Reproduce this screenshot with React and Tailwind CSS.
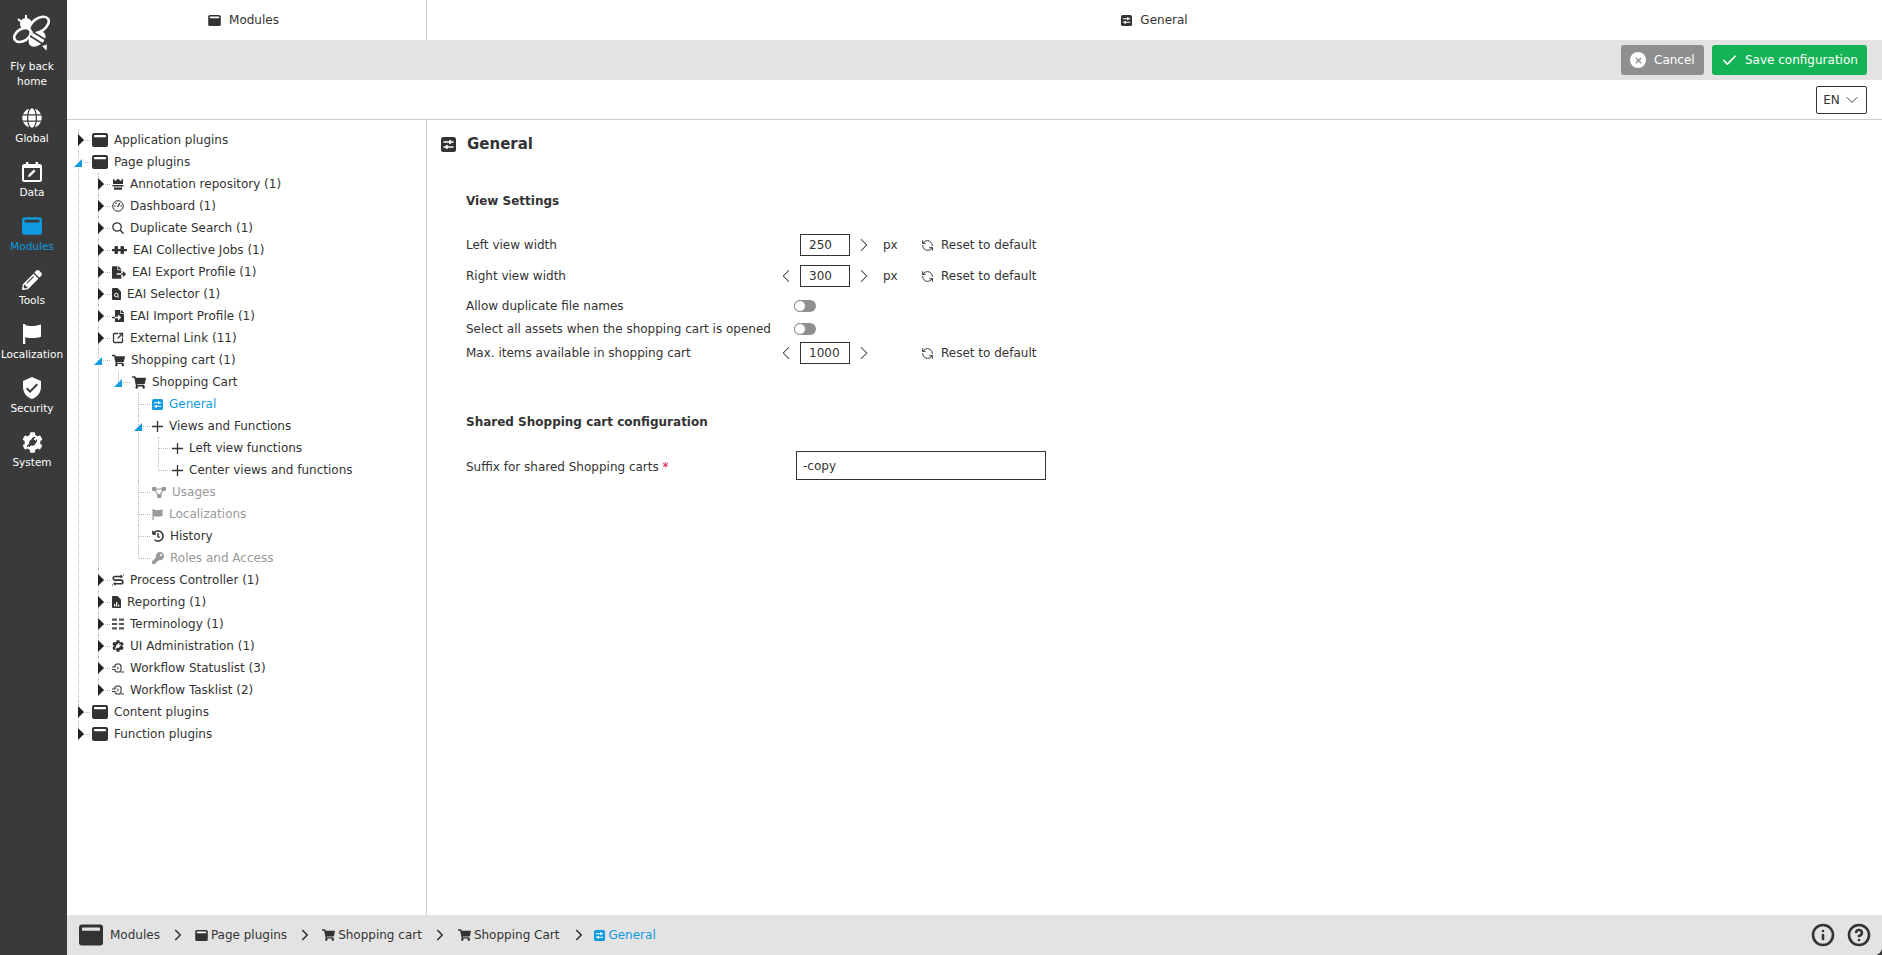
import React from "react";
import { ChevronDown, ChevronLeft, ChevronRight, Check, X, Info, CircleHelp, SquareArrowOutUpRight, RefreshCcw } from "lucide-react";
import { FaGlobe, FaPencilAlt, FaCog, FaWrench, FaShoppingCart, FaHistory, FaKey, FaFileExport, FaFileImport } from "react-icons/fa";
import { MdVerifiedUser } from "react-icons/md";

const WindowIcon = ({ className, bar = "#fff" }) => (
  <svg viewBox="0 0 16 14" className={className}>
    <rect width="16" height="14" rx="2" fill="currentColor" />
    <rect x="2" y="2" width="12" height="2.2" rx="0.6" fill={bar} />
  </svg>
);

const SlidersIcon = ({ className }) => (
  <svg viewBox="0 0 12 12" className={className}>
    <rect width="12" height="12" rx="2" fill="currentColor" />
    <path d="M2 4h8M2 8h8" stroke="#fff" strokeWidth="1.1" fill="none" />
    <rect x="6.500" y="2.500" width="1.600" height="3" fill="#fff" />
    <rect x="3.800" y="6.500" width="1.600" height="3" fill="#fff" />
  </svg>
);

const FlagIcon = ({ className }) => (
  <svg viewBox="0 0 20 22" className={className}>
    <path d="M0 0h2.500v1C7 2.500 11 3 20 .5V14c-8 2.500-13 1.500-17.500.5V22H0z" fill="currentColor" />
  </svg>
);

const PlusIcon = () => (
  <svg viewBox="0 0 11 11" className="h-[11px] w-[11px]">
    <path d="M5.500 0v11M0 5.500h11" stroke="#333" strokeWidth="1.300" />
  </svg>
);

const SearchIcon = () => (
  <svg viewBox="0 0 12 12" className="h-[12px] w-[12px]">
    <circle cx="5" cy="5" r="4.200" fill="none" stroke="#333" strokeWidth="1.300" />
    <path d="M8 8l3.500 3.500" stroke="#333" strokeWidth="1.500" />
  </svg>
);

const Crown = () => (
  <svg viewBox="0 0 12 12" className="h-[12px] w-[12px]">
    <path d="M1 .5 3.500 3 6 .5 8.500 3 11 .5V6H1zM.5 7h11v1.400H.5zM2 9.400h8V11.800H2z" fill="#333" />
  </svg>
);

const Gauge = () => (
  <svg viewBox="0 0 12 12" className="h-[12px] w-[12px]">
    <circle cx="6" cy="6" r="5.300" fill="none" stroke="#333" strokeWidth="1" />
    <path d="M5.500 7 8 3" stroke="#333" strokeWidth="1.400" />
    <circle cx="2.800" cy="6" r=".8" fill="#333" /><circle cx="4" cy="3.300" r=".8" fill="#333" /><circle cx="9.200" cy="6" r=".8" fill="#333" />
  </svg>
);

const Jobs = () => (
  <svg viewBox="0 0 15 10" className="h-[10px] w-[15px]">
    <path d="M0 4h15v2.200H0z" fill="#333" />
    <rect x="2.500" y="1" width="3.500" height="8" rx="1" fill="#333" />
    <rect x="8.500" y="1" width="3.500" height="8" rx="1" fill="#333" />
  </svg>
);

const FileSearch = () => (
  <svg viewBox="0 0 9 12" className="h-[12px] w-[9px]">
    <path d="M1 0h4.500L9 3.500V11a1 1 0 0 1-1 1H1a1 1 0 0 1-1-1V1a1 1 0 0 1 1-1z" fill="#333" />
    <circle cx="4.300" cy="7" r="1.800" fill="none" stroke="#fff" strokeWidth="1" />
    <path d="M5.600 8.300 7 9.700" stroke="#fff" strokeWidth="1" />
  </svg>
);

const Usages = () => (
  <svg viewBox="0 0 14 11" className="h-[11px] w-[14px]">
    <path d="M2 2h10M2 2l5 7M12 2 7 9" stroke="#999" strokeWidth="1.200" />
    <rect x="0" y="0" width="4.500" height="4" rx="1" fill="#999" />
    <rect x="9.500" y="0" width="4.500" height="4" rx="1" fill="#999" />
    <rect x="5" y="7" width="4.500" height="4" rx="1" fill="#999" />
  </svg>
);

const ProcessIcon = () => (
  <svg viewBox="0 0 12 12" className="h-[12px] w-[12px]">
    <path d="M10 2.500H3a1.800 1.800 0 0 0 0 3.600h6a1.800 1.800 0 0 1 0 3.600H2" fill="none" stroke="#333" strokeWidth="1.600" />
    <path d="M8.500.5 11 2.500 8.500 4.500zM3.500 7.700 1 9.700l2.500 2z" fill="#333" />
    <path d="M11 .5h1V1.500h-1zM0 10.500h1v1H0z" fill="#333" />
  </svg>
);

const ReportIcon = () => (
  <svg viewBox="0 0 9 12" className="h-[12px] w-[9px]">
    <path d="M1 0h4.500L9 3.500V11a1 1 0 0 1-1 1H1a1 1 0 0 1-1-1V1a1 1 0 0 1 1-1z" fill="#333" />
    <path d="M2 8h1.200v2.500H2zM4 6h1.200v4.500H4zM6 8.500h1.200v2H6z" fill="#fff" />
  </svg>
);

const TermIcon = () => (
  <svg viewBox="0 0 12 12" className="h-[12px] w-[12px]">
    <path d="M0 .5h5v2.200H0zM0 4.900h5v2.200H0zM0 9.300h5v2.200H0zM7 .5h5v2.200H7zM7 4.900h5v2.200H7zM7 9.300h5v2.200H7z" fill="#555" />
  </svg>
);

const FlowIcon = () => (
  <svg viewBox="0 0 12 12" className="h-[12px] w-[12px]">
    <path d="M2.800 5V3.500L4.500 2h3l1.500 1.500V8l-1.500 2h-3L2.800 8.500" fill="none" stroke="#333" strokeWidth="1.100" />
    <path d="M0 5h3.500M0 7.500h3.500M5 4.500l1.500 1.500L5 7.500M8.500 10H12" stroke="#333" strokeWidth="1" fill="none" />
  </svg>
);

const DataIcon = () => (
  <svg viewBox="0 0 20 20" className="h-[20px] w-[20px]">
    <path d="M4 0h2.400v2h7.200V0H16v2h1.500A2.500 2.500 0 0 1 20 4.500v13a2.500 2.500 0 0 1-2.500 2.500h-15A2.500 2.500 0 0 1 0 17.500v-13A2.500 2.500 0 0 1 2.500 2H4zM2 6v11.500a.5.5 0 0 0 .5.5h15a.5.5 0 0 0 .5-.5V6z" fill="#fff" />
    <path d="M11.800 7.500l1.700 1.700-5.300 5.300-2.200.5.500-2.200z" fill="#fff" />
  </svg>
);

const Bee = () => (
  <svg viewBox="0 0 38 38" className="h-[38px] w-[38px]">
    <path d="M13 1v4M5 5l3 2.500" stroke="#fff" strokeWidth="2" />
    <circle cx="13" cy="10" r="6" fill="#fff" />
    <ellipse cx="26" cy="11" rx="11" ry="6.500" transform="rotate(-35 26 11)" fill="#3a3a3a" stroke="#fff" strokeWidth="2.600" />
    <ellipse cx="9.500" cy="21" rx="9" ry="6" transform="rotate(-32 9.500 21)" fill="#3a3a3a" stroke="#fff" strokeWidth="2.600" />
    <ellipse cx="24" cy="25" rx="9.500" ry="6.500" transform="rotate(-38 24 25)" fill="#fff" />
    <path d="M17 22l13 8M20 18l13 8" stroke="#3a3a3a" strokeWidth="1.600" />
    <path d="M29 32l4.500 4.500.5-6z" fill="#fff" />
  </svg>
);

const GearWrench = ({ size, gear, wrench }) => (
  <span className={`relative flex items-center justify-center ${size}`}>
    <FaCog className={`h-full w-full ${gear}`} />
    <FaWrench className={`absolute h-1/2 w-1/2 ${wrench}`} />
  </span>
);

const SideItem = ({ icon, label, active }) => (
  <div className={`flex h-[54px] flex-col items-center ${active ? "text-[#0e9be0]" : "text-white"}`}>
    <div className="flex h-[24px] items-center justify-center">{icon}</div>
    <span className="mt-[1px] whitespace-nowrap text-[10.5px] leading-[14px]">{label}</span>
  </div>
);

const Triangle = ({ open }) =>
  open ? (
    <svg viewBox="0 0 8 8" className="absolute left-[-4px] top-[8px] h-[8px] w-[8px]">
      <path d="M8 0v8H0z" fill="#0e9be0" />
    </svg>
  ) : (
    <svg viewBox="0 0 6 12" className="absolute left-0 top-[5px] h-[12px] w-[6px]">
      <path d="M0 0l6 6-6 6z" fill="#222" />
    </svg>
  );

const win = <WindowIcon className="h-[14px] w-[16px] text-[#333]" />;
const cart = <FaShoppingCart className="h-[13px] w-[14px] text-[#333]" />;
const cartSmall = <FaShoppingCart className="h-[13px] w-[13px] text-[#333]" />;
const plus = <PlusIcon />;
const flow = <FlowIcon />;

const tree = [
  { label: "Application plugins", icon: win, closed: true },
  {
    label: "Page plugins",
    icon: win,
    children: [
      { label: "Annotation repository (1)", icon: <Crown />, closed: true },
      { label: "Dashboard (1)", icon: <Gauge />, closed: true },
      { label: "Duplicate Search (1)", icon: <SearchIcon />, closed: true },
      { label: "EAI Collective Jobs (1)", icon: <Jobs />, closed: true },
      { label: "EAI Export Profile (1)", icon: <FaFileExport className="h-[13px] w-[14px] text-[#333]" />, closed: true },
      { label: "EAI Selector (1)", icon: <FileSearch />, closed: true },
      { label: "EAI Import Profile (1)", icon: <FaFileImport className="h-[12px] w-[12px] text-[#333]" />, closed: true },
      { label: "External Link (11)", icon: <SquareArrowOutUpRight className="h-[12px] w-[12px] text-[#333]" strokeWidth={2.6} />, closed: true },
      {
        label: "Shopping cart (1)",
        icon: cartSmall,
        children: [
          {
            label: "Shopping Cart",
            icon: cart,
            children: [
              { label: "General", icon: <SlidersIcon className="h-[11px] w-[11px] text-[#0e9be0]" />, active: true },
              {
                label: "Views and Functions",
                icon: plus,
                children: [
                  { label: "Left view functions", icon: plus },
                  { label: "Center views and functions", icon: plus },
                ],
              },
              { label: "Usages", icon: <Usages />, muted: true },
              { label: "Localizations", icon: <FlagIcon className="h-[11px] w-[11px] text-[#999]" />, muted: true },
              { label: "History", icon: <FaHistory className="h-[12px] w-[12px] text-[#333]" /> },
              { label: "Roles and Access", icon: <FaKey className="h-[12px] w-[12px] text-[#999]" />, muted: true },
            ],
          },
        ],
      },
      { label: "Process Controller (1)", icon: <ProcessIcon />, closed: true },
      { label: "Reporting (1)", icon: <ReportIcon />, closed: true },
      { label: "Terminology (1)", icon: <TermIcon />, closed: true },
      { label: "UI Administration (1)", icon: <GearWrench size="h-[12px] w-[12px]" gear="text-[#333]" wrench="text-white" />, closed: true },
      { label: "Workflow Statuslist (3)", icon: flow, closed: true },
      { label: "Workflow Tasklist (2)", icon: flow, closed: true },
    ],
  },
  { label: "Content plugins", icon: win, closed: true },
  { label: "Function plugins", icon: win, closed: true },
];

const TreeNode = ({ node, last }) => (
  <li className="relative">
    <span className={`absolute left-0 top-0 border-l border-dotted border-[#bbb] ${last ? "h-[11px]" : "h-full"}`} />
    <div className="flex h-[22px] items-center">
      <span className="relative flex h-[22px] w-[14px] shrink-0 items-center">
        <span className="ml-[1px] w-[11px] border-t border-dotted border-[#bbb]" />
        {(node.closed || node.children) && <Triangle open={!node.closed} />}
      </span>
      <span className="flex shrink-0 items-center justify-center">{node.icon}</span>
      <span
        className={`ml-[6px] whitespace-nowrap text-[12px] ${
          node.active ? "text-[#0e9be0]" : node.muted ? "text-[#999]" : "text-[#333]"
        }`}
      >
        {node.label}
      </span>
    </div>
    {node.children && (
      <ul className="ml-[20px]">
        {node.children.map((child, i) => (
          <TreeNode key={child.label} node={child} last={i === node.children.length - 1} />
        ))}
      </ul>
    )}
  </li>
);

const Toggle = () => (
  <span className="ml-[14px] flex h-[12px] w-[22px] items-center rounded-full bg-[#8f8f8f]">
    <span className="h-[12px] w-[12px] rounded-full border border-[#8f8f8f] bg-white" />
  </span>
);

const NumberRow = ({ label, value, left, right, unit }) => (
  <div className="flex h-[22px] items-center text-[12px] text-[#333]">
    <span className="w-[306px] shrink-0">{label}</span>
    <span className="flex w-[28px] justify-center">{left && <ChevronLeft className="h-[22px] w-[22px]" strokeWidth={1.1} />}</span>
    <input
      readOnly
      defaultValue={value}
      className="h-[22px] w-[50px] border border-[#333] pl-[8px] text-[12px] outline-none"
    />
    <span className="flex w-[28px] justify-center">{right && <ChevronRight className="h-[22px] w-[22px]" strokeWidth={1.1} />}</span>
    <span className="ml-[5px] w-[38px]">{unit && "px"}</span>
    <RefreshCcw className="h-[13px] w-[13px]" strokeWidth={1.8} />
    <span className="ml-[7px]">Reset to default</span>
  </div>
);

const Crumb = ({ icon, label, active }) => (
  <span className={`flex items-center gap-[3px] text-[12px] ${active ? "text-[#0e9be0]" : "text-[#333]"}`}>
    {icon}
    {label}
  </span>
);

const Sep = () => <ChevronRight className="h-[18px] w-[18px] text-[#333]" strokeWidth={2.2} />;

export default function App() {
  return (
    <div className="flex h-[955px] w-[1882px] overflow-hidden bg-[#3a3a3a] font-['DejaVu_Sans',sans-serif]">
      <aside className="flex w-[67px] shrink-0 flex-col items-center pr-[3px]">
        <div className="mt-[14px] flex h-[38px] justify-center"><Bee /></div>
        <div className="mt-[7px] h-[47px] whitespace-nowrap text-center text-[10.5px] leading-[15px] text-white">
          Fly back
          <br />
          home
        </div>
        <nav className="w-full">
          <SideItem label="Global" icon={<FaGlobe className="h-[20px] w-[20px]" />} />
          <SideItem label="Data" icon={<DataIcon />} />
          <SideItem label="Modules" active icon={<WindowIcon bar="#3a3a3a" className="h-[18px] w-[20px]" />} />
          <SideItem label="Tools" icon={<FaPencilAlt className="h-[20px] w-[20px]" />} />
          <SideItem label="Localization" icon={<FlagIcon className="h-[20px] w-[18px]" />} />
          <SideItem label="Security" icon={<MdVerifiedUser className="h-[24px] w-[24px]" />} />
          <SideItem label="System" icon={<GearWrench size="h-[21px] w-[21px]" gear="text-white" wrench="text-[#3a3a3a]" />} />
        </nav>
      </aside>

      <main className="flex min-w-0 flex-1 flex-col rounded-br-[8px] bg-white">
        <header className="flex h-[40px] shrink-0 text-[12px] text-[#333]">
          <div className="flex w-[360px] items-center justify-center gap-[8px] border-r border-[#ccc] pr-[6px]">
            <WindowIcon className="h-[11px] w-[13px]" />
            Modules
          </div>
          <div className="flex flex-1 items-center justify-center gap-[8px]">
            <SlidersIcon className="h-[11px] w-[11px]" />
            General
          </div>
        </header>

        <div className="flex h-[40px] shrink-0 items-center justify-end gap-[8px] bg-[#e3e3e3] pr-[15px]">
          <button className="flex h-[30px] w-[83px] items-center rounded-[3px] bg-[#8f8f8f] pl-[9px] text-[12px] text-white">
            <span className="flex h-[16px] w-[16px] items-center justify-center rounded-full bg-white">
              <X className="h-[9px] w-[9px] text-[#8f8f8f]" strokeWidth={3.5} />
            </span>
            <span className="ml-[8px]">Cancel</span>
          </button>
          <button className="flex h-[30px] w-[155px] items-center rounded-[3px] bg-[#14b355] pl-[9px] text-[12px] text-white">
            <Check className="h-[17px] w-[17px]" strokeWidth={2.4} />
            <span className="ml-[7px] whitespace-nowrap">Save configuration</span>
          </button>
        </div>

        <div className="flex h-[40px] shrink-0 items-center justify-end border-b border-[#ccc] pr-[15px]">
          <div className="ml-auto flex h-[28px] w-[51px] items-center justify-center gap-[2px] rounded-[2px] border border-[#333] pl-[2px] text-[12px] text-[#333]">
            EN
            <ChevronDown className="h-[20px] w-[20px]" strokeWidth={1.1} />
          </div>
        </div>

        <div className="flex min-h-0 flex-1">
          <div className="w-[360px] shrink-0 border-r border-[#ccc] pl-[11px] pt-[9px]">
            <ul>
              {tree.map((node, i) => (
                <TreeNode key={node.label} node={node} last={i === tree.length - 1} />
              ))}
            </ul>
          </div>

          <section className="min-w-0 flex-1 text-[#333]">
            <div className="mt-[14px] flex h-[20px] items-center pl-[14px]">
              <SlidersIcon className="h-[15px] w-[15px]" />
              <h1 className="ml-[11px] text-[15px] font-bold">General</h1>
            </div>
            <div className="pl-[39px]">
              <h2 className="mt-[39px] h-[16px] text-[12px] font-bold leading-[16px]">View Settings</h2>
              <div className="mt-[25px]">
                <NumberRow label="Left view width" value="250" right unit />
              </div>
              <div className="mt-[9px]">
                <NumberRow label="Right view width" value="300" left right unit />
              </div>
              <div className="mt-[13px] flex h-[12px] items-center text-[12px]">
                <span className="w-[314px] shrink-0">Allow duplicate file names</span>
                <Toggle />
              </div>
              <div className="mt-[11px] flex h-[12px] items-center text-[12px]">
                <span className="w-[314px] shrink-0 whitespace-nowrap">Select all assets when the shopping cart is opened</span>
                <Toggle />
              </div>
              <div className="mt-[7px]">
                <NumberRow label="Max. items available in shopping cart" value="1000" left right />
              </div>
              <h2 className="mt-[50px] h-[16px] text-[12px] font-bold leading-[16px]">Shared Shopping cart configuration</h2>
              <div className="mt-[21px] flex h-[29px] items-center text-[12px]">
                <span className="w-[330px] shrink-0 pt-[3px]">
                  Suffix for shared Shopping carts <span className="text-[#e0004d]">*</span>
                </span>
                <input
                  readOnly
                  defaultValue="-copy"
                  className="h-[29px] w-[250px] border border-[#333] pl-[6px] text-[12px] outline-none"
                />
              </div>
            </div>
          </section>
        </div>

        <footer className="flex h-[40px] shrink-0 items-center rounded-br-[8px] bg-[#e3e3e3] pl-[12px] pr-[11px] text-[#333]">
          <WindowIcon bar="#e3e3e3" className="h-[24px] w-[24px]" />
          <span className="ml-[7px] text-[12px]">Modules</span>
          <span className="ml-[9px]"><Sep /></span>
          <span className="ml-[8px]"><Crumb icon={<WindowIcon className="h-[11px] w-[13px]" />} label="Page plugins" /></span>
          <span className="ml-[9px]"><Sep /></span>
          <span className="ml-[8px]"><Crumb icon={<FaShoppingCart className="h-[12px] w-[13px]" />} label="Shopping cart" /></span>
          <span className="ml-[9px]"><Sep /></span>
          <span className="ml-[9px]"><Crumb icon={<FaShoppingCart className="h-[12px] w-[13px]" />} label="Shopping Cart" /></span>
          <span className="ml-[11px]"><Sep /></span>
          <span className="ml-[6px]"><Crumb active icon={<SlidersIcon className="h-[11px] w-[11px]" />} label="General" /></span>
          <div className="ml-auto flex items-center gap-[12px]">
            <Info className="h-[24px] w-[24px]" strokeWidth={2.6} />
            <CircleHelp className="h-[24px] w-[24px]" strokeWidth={2.6} />
          </div>
        </footer>
      </main>
    </div>
  );
}
